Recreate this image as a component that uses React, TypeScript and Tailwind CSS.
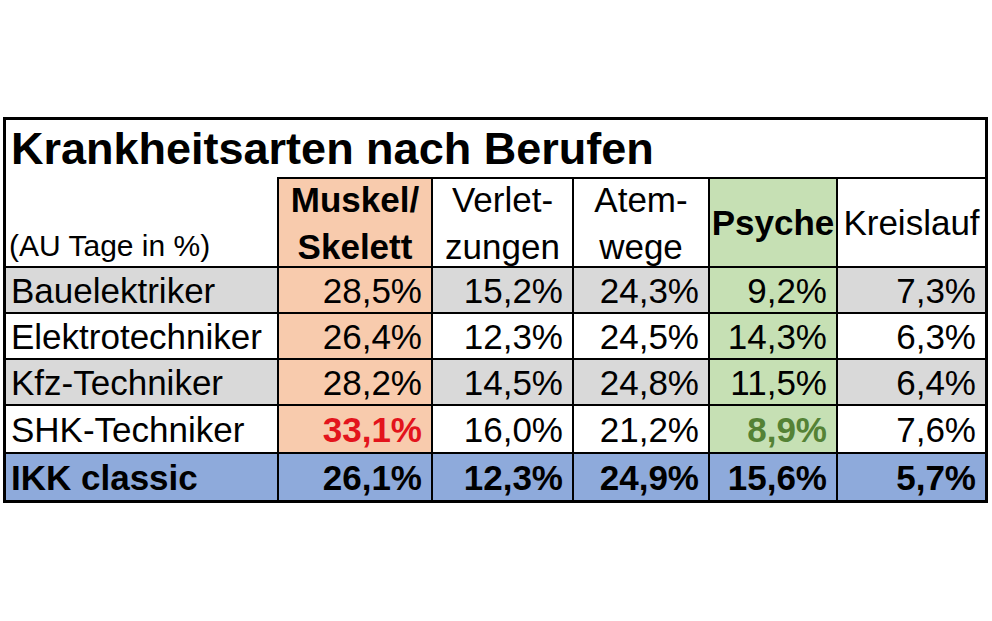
import React from 'react';

type Row = {
  label: string;
  values: string[];
  shade: 'gray' | 'white' | 'blue';
  height: string;
};

const rows: Row[] = [
  { label: 'Bauelektriker', values: ['28,5%', '15,2%', '24,3%', '9,2%', '7,3%'], shade: 'gray', height: 'h-[46px]' },
  { label: 'Elektrotechniker', values: ['26,4%', '12,3%', '24,5%', '14,3%', '6,3%'], shade: 'white', height: 'h-[46px]' },
  { label: 'Kfz-Techniker', values: ['28,2%', '14,5%', '24,8%', '11,5%', '6,4%'], shade: 'gray', height: 'h-[46px]' },
  { label: 'SHK-Techniker', values: ['33,1%', '16,0%', '21,2%', '8,9%', '7,6%'], shade: 'white', height: 'h-[48px]' },
  { label: 'IKK classic', values: ['26,1%', '12,3%', '24,9%', '15,6%', '5,7%'], shade: 'blue', height: 'h-[48px]' },
];

// widths include the 2px left rule of every data column
const colWidths = ['w-[154px]', 'w-[141px]', 'w-[136px]', 'w-[128px]', 'w-[149px]'];

const cellBg = (row: Row, col: number) => {
  if (row.shade === 'blue') return 'bg-[#8eaadb]';
  if (col === 0) return 'bg-[#f8cbad]';
  if (col === 3) return 'bg-[#c6e0b4]';
  return row.shade === 'gray' ? 'bg-[#d9d9d9]' : 'bg-white';
};

const valueColor = (row: Row, col: number) => {
  if (row.label === 'SHK-Techniker' && col === 0) return 'text-[#e3141c] font-bold';
  if (row.label === 'SHK-Techniker' && col === 3) return 'text-[#548235] font-bold';
  return 'text-black';
};

const HeaderCell: React.FC<{ width: string; bg?: string; bold?: boolean; lines: string[] }> = ({ width, bg = 'bg-white', bold, lines }) => (
  <div className={`${width} ${bg} border-l-2 border-t-2 border-black flex flex-col justify-center items-center text-center text-[35px] leading-[47px] whitespace-nowrap ${bold ? 'font-bold' : ''}`}>
    {lines.map((l) => (
      <span key={l}>{l}</span>
    ))}
  </div>
);

export default function App() {
  return (
    <div className="w-[992px] min-h-[621px] bg-white pt-[117px] pl-[3px] font-['Liberation_Sans',Arial,sans-serif] text-black">
      <div className="w-[985px] border-[3px] border-black">
        <div className="h-[57px] flex items-center pl-[5px] text-[45px] font-bold leading-none">
          Krankheitsarten nach Berufen
        </div>

        <div className="flex h-[89px]">
          <div className="w-[271px] flex items-end pl-[3px] pb-[5px] text-[30px] leading-none">
            (AU Tage in %)
          </div>
          <HeaderCell width={colWidths[0]} bg="bg-[#f8cbad]" bold lines={['Muskel/', 'Skelett']} />
          <HeaderCell width={colWidths[1]} lines={['Verlet-', 'zungen']} />
          <HeaderCell width={colWidths[2]} lines={['Atem-', 'wege']} />
          <HeaderCell width={colWidths[3]} bg="bg-[#c6e0b4]" bold lines={['Psyche']} />
          <HeaderCell width={colWidths[4]} lines={['Kreislauf']} />
        </div>

        {rows.map((row) => (
          <div key={row.label} className={`flex ${row.height} text-[35px] leading-none ${row.shade === 'blue' ? 'font-bold' : ''}`}>
            <div
              className={`w-[271px] border-t-2 border-black flex items-center pl-[5px] ${
                row.shade === 'gray' ? 'bg-[#d9d9d9]' : row.shade === 'blue' ? 'bg-[#8eaadb]' : 'bg-white'
              }`}
            >
              {row.label}
            </div>
            {row.values.map((v, i) => (
              <div
                key={i}
                className={`${colWidths[i]} ${cellBg(row, i)} border-l-2 border-t-2 border-black flex items-center justify-end pr-[9px] ${valueColor(row, i)}`}
              >
                {v}
              </div>
            ))}
          </div>
        ))}
      </div>
    </div>
  );
}
